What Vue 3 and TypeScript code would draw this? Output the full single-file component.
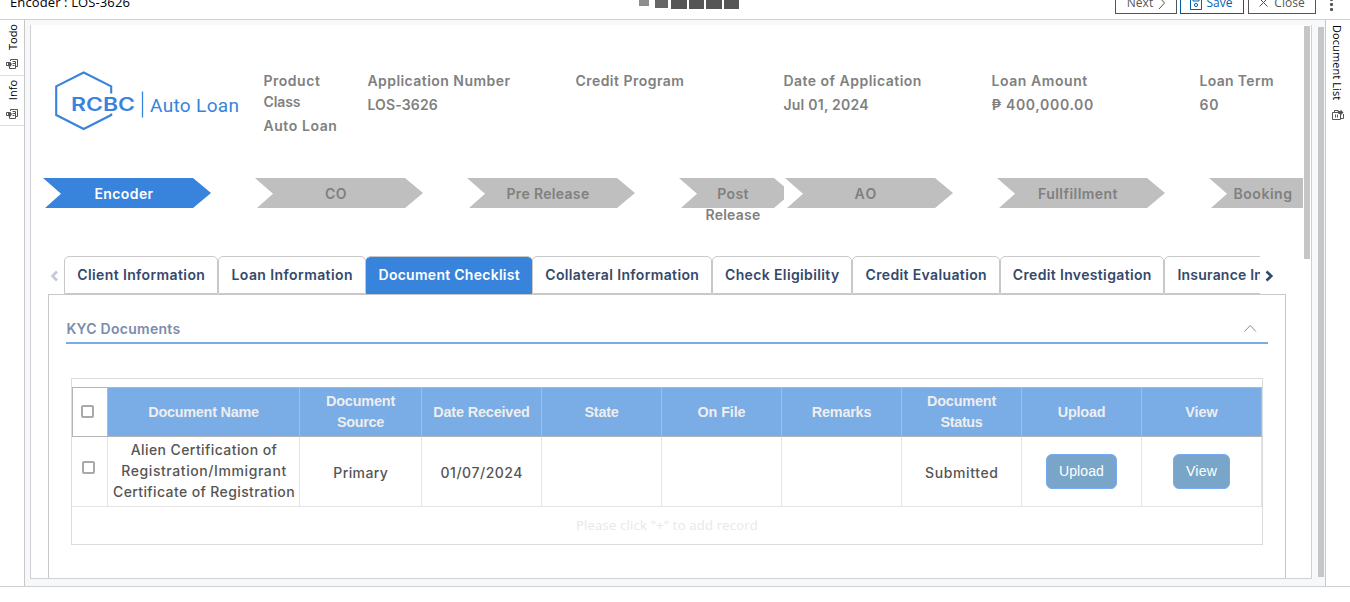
<script setup lang="ts">
import { ref } from 'vue'
import type { Directive } from 'vue'

const vFit: Directive<HTMLElement, number> = {
  mounted(el, binding) {
    const count = (el.textContent ?? '').trim().length
    const natural = el.getBoundingClientRect().width
    el.style.letterSpacing = `${((binding.value - natural) / count).toFixed(3)}px`
  },
}

interface Line { text: string; w: number }
interface Field { label: Line[]; value?: Line }

const fields: Field[] = [
  { label: [{ text: 'Product', w: 57 }, { text: 'Class', w: 37 }], value: { text: 'Auto Loan', w: 74 } },
  { label: [{ text: 'Application Number', w: 143 }], value: { text: 'LOS-3626', w: 70.5 } },
  { label: [{ text: 'Credit Program', w: 109 }] },
  { label: [{ text: 'Date of Application', w: 138.5 }], value: { text: 'Jul 01, 2024', w: 85.5 } },
  { label: [{ text: 'Loan Amount', w: 96.5 }], value: { text: '₱ 400,000.00', w: 102.5 } },
  { label: [{ text: 'Loan Term', w: 74.5 }], value: { text: '60', w: 20 } },
]

const steps = [
  { lines: [{ text: 'Encoder', w: 59 }], active: true },
  { lines: [{ text: 'CO', w: 22 }] },
  { lines: [{ text: 'Pre Release', w: 83 }] },
  { lines: [{ text: 'Post', w: 31.5 }, { text: 'Release', w: 55 }], short: true },
  { lines: [{ text: 'AO', w: 23 }] },
  { lines: [{ text: 'Fullfillment', w: 80 }] },
  { lines: [{ text: 'Booking', w: 59 }], last: true },
]

const tabs = [
  { id: 't1', text: 'Client Information', w: 128 },
  { id: 't2', text: 'Loan Information', w: 121.5 },
  { id: 't3', text: 'Document Checklist', w: 141.5, active: true },
  { id: 't4', text: 'Collateral Information', w: 154 },
  { id: 't5', text: 'Check Eligibility', w: 114.5 },
  { id: 't6', text: 'Credit Evaluation', w: 121.5 },
  { id: 't7', text: 'Credit Investigation', w: 139 },
  { id: 't8', text: 'Insurance Information', w: 153 },
]

const columns: Line[][] = [
  [{ text: 'Document Name', w: 110.5 }],
  [{ text: 'Document', w: 69 }, { text: 'Source', w: 47 }],
  [{ text: 'Date Received', w: 96.5 }],
  [{ text: 'State', w: 34 }],
  [{ text: 'On File', w: 48 }],
  [{ text: 'Remarks', w: 59.500 }],
  [{ text: 'Document', w: 69 }, { text: 'Status', w: 42 }],
  [{ text: 'Upload', w: 47.5 }],
  [{ text: 'View', w: 32.5 }],
]

const row: Line[][] = [
  [
    { text: 'Alien Certification of', w: 146.5 },
    { text: 'Registration/Immigrant', w: 165.5 },
    { text: 'Certificate of Registration', w: 182 },
  ],
  [{ text: 'Primary', w: 55 }],
  [{ text: '01/07/2024', w: 82.5 }],
  [],
  [],
  [],
  [{ text: 'Submitted', w: 73.5 }],
]

const all = ref(false)
const picked = ref(false)
</script>

<template>
  <div class="app">
    <header class="topbar">
      <div class="title"><span v-fit="120">Encoder : LOS-3626</span></div>
      <div class="blocks"><i class="b1" /><i class="b2" /><i /><i /><i /><i /></div>
      <div class="actions">
        <button class="btn next"><span>Next</span>
          <svg width="8" height="14" viewBox="0 0 8 14"><path d="M1 1l5.500 6L1 13" /></svg>
        </button>
        <button class="btn save">
          <svg width="12" height="14" viewBox="0 0 12 14"><path d="M.5.5h11v13H.5zM3 1v4h6V1" /><circle cx="6" cy="9" r="1.600" /></svg>
          <span>Save</span>
        </button>
        <button class="btn close">
          <svg width="9" height="9" viewBox="0 0 9 9"><path d="M.5.5l8 8M8.500.5l-8 8" /></svg>
          <span>Close</span>
        </button>
        <div class="kebab"><i /><i /><i /></div>
      </div>
    </header>

    <div class="body">
      <aside class="rail left">
        <div v-for="name in ['Todo', 'Info']" :key="name" class="rail-item">
          <span class="up">{{ name }}</span>
          <svg class="ric" width="13" height="12" viewBox="0 0 13 12">
            <path d="M4.500 3V1.500h7v7H10M9.500 3.500v7h-6V8M2.500 4.500h-2v3h2M6.500 3.500h3M6.500 5.500h3M6.500 7.500h2" />
            <path class="fill" d="M2 4h2.500l1.500 2.500L3.500 9.500 2 7.500z" />
          </svg>
        </div>
      </aside>

      <main class="gutter">
        <div class="frame">
          <div class="content">
            <section class="summary">
              <svg class="logo" width="190" height="64" viewBox="0 0 190 64">
                <path class="hex" d="M57.200 24.500V17.300L29.700 3.500 2.200 17.300V46L29.700 60 57.200 46V44.500" />
                <text x="17" y="42.300" class="rcbc" textLength="64" lengthAdjust="spacingAndGlyphs">RCBC</text>
                <path class="bar" d="M88.500 22.500V48.500" />
                <text x="96" y="42.500" class="auto" textLength="89" lengthAdjust="spacing">Auto Loan</text>
              </svg>
              <div v-for="(f, i) in fields" :key="i" class="field">
                <div v-for="l in f.label" :key="l.text" class="line"><span v-fit="l.w">{{ l.text }}</span></div>
                <div v-if="f.value" class="line value"><span v-fit="f.value.w">{{ f.value.text }}</span></div>
              </div>
            </section>

            <section class="steps">
              <div v-for="(s, i) in steps" :key="i" class="step" :class="{ active: s.active, short: s.short, last: s.last }">
                <svg v-if="s.short" class="shape" height="30" viewBox="0 0 106 30">
                  <path d="M0 0H95L105 8.500V21.500L95 30H2L18 15.700z" />
                </svg>
                <svg v-else class="shape" height="30" viewBox="0 0 168 30">
                  <path d="M0 0H150L168 15 150 30H2L18 15.700z" />
                </svg>
                <div class="caption">
                  <div v-for="l in s.lines" :key="l.text"><span v-fit="l.w">{{ l.text }}</span></div>
                </div>
              </div>
            </section>

            <nav class="tabs">
              <svg class="arrow off" width="9" height="12" viewBox="0 0 9 12"><path d="M7 1.500L2.500 6 7 10.500" /></svg>
              <div class="strip">
                <div v-for="t in tabs" :key="t.id" class="tab" :class="[t.id, { active: t.active }]"><span v-fit="t.w">{{ t.text }}</span></div>
              </div>
              <svg class="arrow" width="9" height="12" viewBox="0 0 9 12"><path d="M1.500 1.500L6.300 6 1.500 10.500" /></svg>
            </nav>

            <section class="panel">
              <div class="section-head">
                <span v-fit="114">KYC Documents</span>
                <svg width="14" height="9" viewBox="0 0 14 9"><path d="M1.500 7.500L7.200 1.500l5.700 6" /></svg>
              </div>
              <div class="grid-box">
                <div class="grid-row head">
                  <div class="cell check"><i class="box" :class="{ on: all }" @click="all = !all" /></div>
                  <div v-for="(c, i) in columns" :key="i" class="cell">
                    <div v-for="l in c" :key="l.text"><span v-fit="l.w">{{ l.text }}</span></div>
                  </div>
                </div>
                <div class="grid-row data">
                  <div class="cell check"><i class="box" :class="{ on: picked }" @click="picked = !picked" /></div>
                  <div v-for="(c, i) in row" :key="i" class="cell" :class="c.length === 1 ? 'single' : 'multi'">
                    <div v-for="l in c" :key="l.text"><span v-fit="l.w">{{ l.text }}</span></div>
                  </div>
                  <div class="cell"><button class="pill up-btn"><span v-fit="45">Upload</span></button></div>
                  <div class="cell"><button class="pill view-btn"><span v-fit="31">View</span></button></div>
                </div>
                <div class="hint"><span v-fit="182">Please click "+" to add record</span></div>
              </div>
            </section>
          </div>
          <div class="inner-scroll"><i /></div>
        </div>
        <div class="outer-scroll" />
      </main>

      <aside class="rail right">
        <span class="down">Document List</span>
        <svg class="ric" width="12" height="12" viewBox="0 0 12 12">
          <path d="M.5 3.500h8v7h-8zM2.500 3.500v-2h4M9 9.500h2.500V5M3.500 5.500v3M5.500 5.500v3" />
          <path class="fill" d="M5.500 2h3V.500L11.500 3.500 8.500 6.500V5h-2z" />
        </svg>
      </aside>
    </div>
  </div>
</template>

<style>
html, body { overflow: hidden; background: #fff; }
</style>

<style scoped>
* { box-sizing: border-box; }
.app { width: 1350px; height: 602px; overflow: hidden; display: flex; flex-direction: column; background: #fff; font-family: "Inter", "Liberation Sans", sans-serif; font-size: 14px; }
svg path, svg circle { fill: none; stroke: currentColor; }
span { white-space: pre; display: inline-block; }
button { font: inherit; margin: 0; padding: 0; }

.topbar { height: 20px; flex: none; border-bottom: 1px solid #d0d0d0; display: grid; grid-template-columns: 638px 477px 1fr; overflow: hidden; font-family: "Open Sans", "Noto Sans", sans-serif; }
.title { padding-left: 10px; font-size: 13px; line-height: 18px; margin-top: -7px; color: #000; }
.blocks { display: flex; align-items: flex-start; gap: 2px; }
.blocks i { width: 15.600px; height: 9px; background: #555; }
.blocks .b1 { width: 10px; height: 6px; background: #8e8e8e; margin: 0 4px 0 1px; }
.blocks .b2 { width: 13px; height: 8px; background: #666; margin-right: 1px; }
.actions { display: flex; align-items: flex-start; gap: 3px; }
.btn { margin-top: -9px; height: 23px; border: 1px solid #555; background: #fff; color: #555; font-size: 12px; display: flex; align-items: center; justify-content: center; flex: none; }
.next { width: 62px; gap: 5px; padding-left: 1px; }
.save { width: 64px; gap: 5px; padding-right: 2px; border-color: #005a9e; color: #0063b1; }
.close { width: 68px; gap: 6px; margin-left: 1px; }
.kebab { display: flex; flex-direction: column; gap: 2px; margin: -2px 0 0 11px; }
.kebab i { width: 3px; height: 3px; background: #555; border-radius: 1px; }

.body { height: 567px; flex: none; display: flex; border-bottom: 1px solid #d0d0d0; }
.rail { flex: none; width: 25px; background: #fff; font-family: "Open Sans", "Noto Sans", sans-serif; font-size: 11px; color: #000; }
.left { border-right: 1px solid #c8c8c8; }
.rail-item { border-bottom: 1px solid #ddd; height: 50px; display: flex; flex-direction: column; align-items: center; justify-content: flex-end; padding-bottom: 5px; gap: 8px; }
.rail-item:first-child { height: 56px; }
.up { writing-mode: vertical-rl; transform: rotate(180deg); line-height: 16px; margin-left: 2px; }
.down { writing-mode: vertical-rl; line-height: 16px; margin-right: 2px; height: 75px; letter-spacing: 0.08px; }
.right { border-left: 1px solid #c8c8c8; display: flex; flex-direction: column; align-items: center; padding-top: 5px; gap: 9px; }
.ric { display: block; color: #555; flex: none; }
.ric .fill { fill: #555; stroke: none; }

.gutter { width: 1300px; flex: none; background: #f7f8fa; display: flex; padding: 5px 1px 0 5px; }
.frame { width: 1282px; height: 554px; border: 1px solid #ced0d4; border-top: 0; background: #fff; display: flex; overflow: hidden; }
.content { width: 1272px; overflow: hidden; flex: none; }
.inner-scroll { width: 7px; margin-left: 1px; padding-top: 1px; }
.inner-scroll i { display: block; height: 233px; width: 6px; background: #c6c6c6; }
.outer-scroll { width: 6px; height: 550px; margin: 2px 0 0 6px; background: #c6c6c6; }

.summary { height: 153px; display: grid; grid-template-columns: 232.400px 104px repeat(5, 208px); color: #808080; font-weight: 600; }
.logo { margin: 44px 0 0 23px; color: #3883dc; }
.logo .hex { stroke-width: 2.100; }
.logo .bar { stroke-width: 1.300; }
.logo .rcbc { font: 600 18px "Inter", sans-serif; fill: #3883dc; }
.logo .auto { font: 400 19px "Roboto", sans-serif; fill: #3883dc; }
.field { padding-top: 45px; }
.line { line-height: 21px; height: 21px; }
.value { margin-top: 3px; }

.steps { display: flex; height: 78px; margin-left: 12px; width: 1400px; font-weight: 600; color: #808080; }
.step { width: 212px; flex: none; display: grid; }
.step > * { grid-area: 1 / 1; }
.short, .last { width: 106px; }
.shape { width: 168px; color: #bfbfbf; }
.short .shape { width: 106px; }
.shape path { fill: currentColor; stroke: none; }
.step.active { color: #fff; }
.active .shape { color: #3883dc; }
.caption { width: 162px; padding-top: 5px; line-height: 21px; text-align: center; }
.short .caption, .last .caption { width: 108px; }

.tabs { display: flex; height: 38px; align-items: flex-start; }
.arrow { margin: 14px 0 0 5px; color: #2d4a6c; flex: none; }
.arrow path { stroke-width: 2.600; }
.arrow.off { margin: 14px 5px 0 19px; color: #c3c9d6; }
.strip { width: 1196px; display: flex; overflow: hidden; flex: none; }
.tab { height: 38px; flex: none; border: 1px solid #c8c8c8; border-radius: 5px 5px 0 0; color: #34496b; font-weight: 600; line-height: 36px; text-align: center; padding-left: 0.500px; }
.tab.active { background: #3883dc; color: #fff; border-color: #3883dc; border-top-color: #c8c8c8; }
.t1 { width: 154px; } .t2 { width: 148px; } .t3 { width: 166px; } .t4 { width: 180px; }
.t5 { width: 140px; } .t6 { width: 148px; } .t7 { width: 164px; }
.t8 { width: 180px; text-align: left; padding-left: 12.500px; }

.panel { margin-left: 17px; width: 1238px; height: 300px; border: 1px solid #c8c8c8; padding: 0 17px; }
.section-head { height: 49px; border-bottom: 2px solid #78abe7; display: flex; justify-content: space-between; color: #7b8cab; font-weight: 600; line-height: 21px; padding: 23px 11px 0 0.400px; }
.section-head svg { margin-top: 6px; color: #7b8ca5; }
.grid-box { margin: 34px 0 0 5px; width: 1192px; height: 167px; border: 1px solid #d9dbdd; padding-top: 8px; }
.grid-row { display: grid; grid-template-columns: 36px 192px 122px repeat(6, 120px) 120px; width: 1190px; }
.cell { display: flex; flex-direction: column; align-items: center; justify-content: center; line-height: 21px; border-right: 1px solid #e4e4e4; }
.head { height: 50px; border: 1px solid #b5b5b5; border-right-width: 0; font-family: "Liberation Sans", Arial, sans-serif; font-size: 14.400px; font-weight: 700; color: #eeeeee; }
.head .cell { background: #7aace6; border-color: #b5bac0; }
.head { grid-template-columns: 35px 192px 122px repeat(6, 120px) 120px; }
.head .cell.check { background: #fff; align-items: flex-start; padding: 0 0 2px 8px; }
.data { height: 70px; border-bottom: 1px solid #e4e4e4; color: #555; font-weight: 500; }
.single { padding: 2px 0 0 0.500px; }
.multi { padding: 0 0 2px 1px; }
.data .check { align-items: flex-start; padding: 0 0 8px 10px; }
.box { width: 13px; height: 13px; border: 2px solid #a9a9a9; border-radius: 2px; }
.box.on { background: #3883dc; }
.pill { height: 35px; border: 1px solid #78abf7; border-radius: 6px; background: #78a5c8; color: #fff; font-family: "Liberation Sans", Arial, sans-serif; font-size: 14px; }
.up-btn { width: 71px; }
.view-btn { width: 57px; }
.hint { text-align: center; color: #e8e8e8; font-family: "Open Sans", sans-serif; font-size: 13px; line-height: 37px; }
</style>
